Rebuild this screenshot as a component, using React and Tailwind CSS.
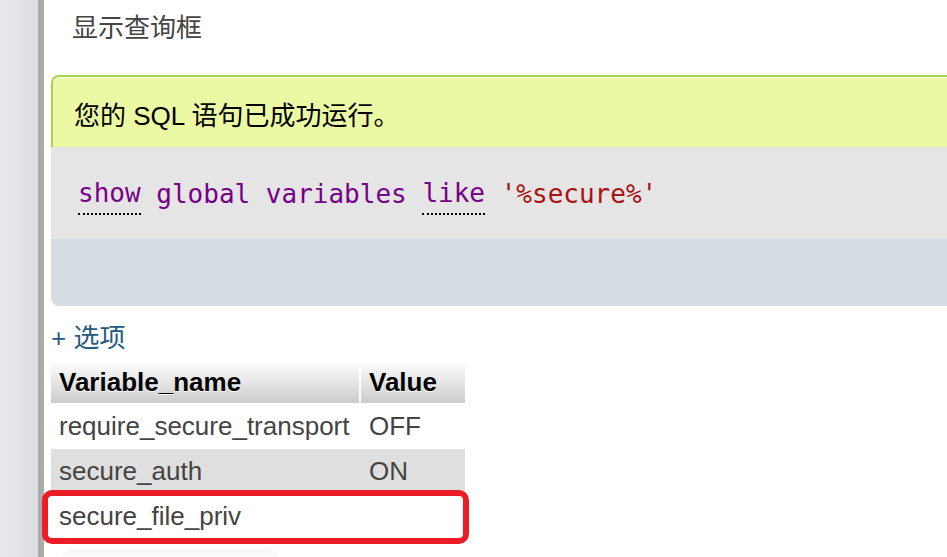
import React from 'react';

const sans = { fontFamily: '"Liberation Sans", "Noto Sans CJK SC", sans-serif' };
const mono = { fontFamily: '"DejaVu Sans Mono", "Liberation Mono", monospace' };

const rows = [
  { name: 'require_secure_transport', value: 'OFF' },
  { name: 'secure_auth', value: 'ON', shaded: true },
  { name: 'secure_file_priv', value: '', marked: true },
];

const App = () => {
  return (
    <div className="flex w-[947px] h-[557px] overflow-hidden bg-white text-[26px]" style={sans}>
      {/* Sidebar edge */}
      <div className="w-[38px] shrink-0 bg-gradient-to-r from-[#e8e9eb] to-[#dadee1]"></div>
      <div className="w-[6px] shrink-0 bg-[#ababab]"></div>

      <div className="flex-1 pl-[7px] min-w-0">
        {/* Title */}
        <div className="h-[56px] flex items-center pl-[21px] text-[#444] leading-none">显示查询框</div>

        {/* Query result box */}
        <div className="mt-[19px] -mr-4">
          <div className="h-[72px] flex items-center pl-[21px] pt-[8px] bg-[#ebf8a4] border-l-2 border-t-2 border-[#a6d64b] rounded-tl-[8px] shadow-[inset_0_1px_0_#fff] text-black leading-none">
            您的 SQL 语句已成功运行。
          </div>
          <div className="h-[92px] flex items-center pl-[27px] pt-[1px] bg-[#e5e5e5] whitespace-pre leading-none" style={mono}>
            <span className="text-[#770088] border-b-2 border-dotted border-black pb-[7px] translate-y-[4px]">show</span>
            <span className="text-[#770088]"> global variables </span>
            <span className="text-[#770088] border-b-2 border-dotted border-black pb-[7px] translate-y-[4px]">like</span>
            <span className="text-[#aa1111]"> '%secure%'</span>
          </div>
          <div className="h-[67px] bg-[#d5dce2] rounded-bl-[8px]"></div>
        </div>

        {/* Options link */}
        <div className="h-[55px] pt-[17px] leading-[30px] text-[#235a81]">+ 选项</div>

        {/* Result table */}
        <div className="w-[414px]">
          <div className="flex h-[42px] font-bold text-black">
            <div className="w-[308px] mr-[2px] pl-[8px] flex items-center bg-gradient-to-b from-white to-[#cccccc] [text-shadow:0_1px_0_#fff]">Variable_name</div>
            <div className="w-[104px] pl-[8px] flex items-center bg-gradient-to-b from-white to-[#cccccc] [text-shadow:0_1px_0_#fff]">Value</div>
          </div>
          {rows.map((r) => (
            <div
              key={r.name}
              className={`relative flex items-center text-[#444] ${r.shaded ? 'h-[45px] bg-[#dfdfdf]' : r.marked ? 'h-[45px]' : 'h-[46px]'}`}
            >
              <div className="w-[310px] pl-[8px]">{r.name}</div>
              <div className="w-[104px] pl-[8px]">{r.value}</div>
              {r.marked && (
                <div className="absolute -left-[9px] -top-[4px] w-[427px] h-[54px] border-[6px] border-[#ec1c24] rounded-[10px]"></div>
              )}
            </div>
          ))}
          <div className="mt-[10px] ml-[10px] w-[220px] h-[12px] rounded-t-[12px] bg-gradient-to-b from-[#f6f6f6] to-white"></div>
        </div>
      </div>
    </div>
  );
};

export default App;
